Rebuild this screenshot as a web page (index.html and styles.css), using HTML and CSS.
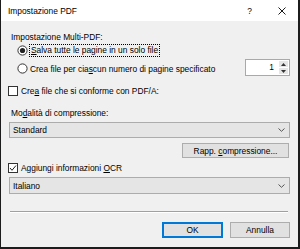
FILE: index.html
```html
<!DOCTYPE html>
<html lang="it">
<head>
  <meta charset="UTF-8" />
  <title>Impostazione PDF</title>
  <link rel="stylesheet" href="styles.css">
</head>
<body>
<div class="dialog">
  <div class="titlebar">
    <span class="title">Impostazione PDF</span>
    <span class="help">?</span>
    <span class="close">
      <svg width="8" height="8" viewBox="0 0 8 8"><path d="M0.5 0.5L7.5 7.5M7.5 0.5L0.5 7.5" stroke="#000" stroke-width="0.9" fill="none"/></svg>
    </span>
  </div>

  <div class="content">
    <div class="label label-multi">Impostazione Multi-PDF:</div>

    <div class="row radio-row first">
      <svg class="radio" width="11" height="11" viewBox="0 0 11 11"><circle cx="5.5" cy="5.5" r="4.6" fill="#fff" stroke="#333"/><circle cx="5.5" cy="5.5" r="2.6" fill="#222"/></svg>
      <span class="text focus"><u>S</u>alva tutte le pagine in un solo file</span>
    </div>

    <div class="row radio-row second">
      <svg class="radio" width="11" height="11" viewBox="0 0 11 11"><circle cx="5.5" cy="5.5" r="4.6" fill="#fff" stroke="#333"/></svg>
      <span class="text">Crea file per cia<u>s</u>cun numero di pagine specificato</span>
      <div class="spin">
        <span class="spin-value">1</span>
        <span class="spin-buttons">
          <span class="spin-btn"><svg width="5" height="3" viewBox="0 0 5 3"><path d="M0 3L2.5 0L5 3Z" fill="#333"/></svg></span>
          <span class="spin-btn"><svg width="5" height="3" viewBox="0 0 5 3"><path d="M0 0L2.5 3L5 0Z" fill="#333"/></svg></span>
        </span>
      </div>
    </div>

    <div class="row check-row pdfa">
      <svg class="check" width="10" height="10" viewBox="0 0 10 10"><rect x="0.5" y="0.5" width="9" height="9" fill="#fff" stroke="#333"/></svg>
      <span class="text">Cre<u>a</u> file che si conforme con PDF/A:</span>
    </div>

    <div class="label label-mode">Mo<u>d</u>alità di compressione:</div>

    <div class="select select-mode">
      <span>Standard</span>
      <svg width="7" height="4" viewBox="0 0 7 4"><path d="M0.5 0.5L3.5 3.3L6.5 0.5" stroke="#555" fill="none"/></svg>
    </div>

    <div class="row btn-row">
      <button class="btn btn-ratio">Rapp. <u>c</u>ompressione...</button>
    </div>

    <div class="row check-row ocr">
      <svg class="check" width="10" height="10" viewBox="0 0 10 10"><rect x="0.5" y="0.5" width="9" height="9" fill="#fff" stroke="#333"/><path d="M2 5L4 7.3L8 2.5" stroke="#222" fill="none"/></svg>
      <span class="text">Aggiungi informazioni <u>O</u>CR</span>
    </div>

    <div class="select select-lang">
      <span>Italiano</span>
      <svg width="7" height="4" viewBox="0 0 7 4"><path d="M0.5 0.5L3.5 3.3L6.5 0.5" stroke="#555" fill="none"/></svg>
    </div>

    <div class="separator"></div>

    <div class="row footer">
      <button class="btn btn-ok">OK</button>
      <button class="btn btn-cancel">Annulla</button>
    </div>
  </div>
</div>
</body>
</html>
```

FILE: styles.css
```css
body {
  margin: 0;
  font-family: 'Liberation Sans', Arial, sans-serif;
  font-size: 8.4px;
  color: #000;
  background: #fff;
}
u {
  text-decoration-thickness: 1px;
  text-underline-offset: 1px;
}
.dialog {
  width: 300px;
  height: 249px;
  box-sizing: border-box;
  border-style: solid;
  border-color: #1c1c1c;
  border-width: 0 2px 2px 1px;
  background: #f0f0f0;
}
.titlebar {
  height: 21px;
  background: #fff;
  display: flex;
  align-items: center;
  padding-left: 7px;
}
.title {
  flex: 1;
}
.help {
  width: 31px;
  text-align: center;
}
.close {
  width: 33px;
  display: flex;
  justify-content: center;
}
.content {
  padding: 10px 8px 0 7px;
}
.row {
  display: flex;
  align-items: center;
}
.label {
  height: 12px;
  line-height: 12px;
  padding-left: 3px;
}
.radio-row {
  height: 12px;
  padding-left: 9px;
  margin-top: 1px;
}
.radio-row.second {
  height: 17px;
  margin-top: 3px;
}
.radio {
  margin-right: 2px;
  flex: none;
}
.radio-row.second .radio {
  margin-top: 2px;
}
.radio-row.second .text {
  margin-top: 2px;
}
.text {
  white-space: nowrap;
}
.text.focus {
  outline: 1px dotted #000;
  outline-offset: 0;
  padding: 0 1px;
  line-height: 11px;
}
.spin {
  margin-left: auto;
  width: 45px;
  height: 17px;
  box-sizing: border-box;
  border: 1px solid #a9a9a9;
  background: #fff;
  display: flex;
}
.spin-value {
  flex: 1;
  text-align: right;
  padding-right: 4px;
  line-height: 15px;
}
.spin-buttons {
  width: 11px;
  display: flex;
  flex-direction: column;
  gap: 1px;
  padding: 1px;
  box-sizing: border-box;
}
.spin-btn {
  flex: 1;
  background: #e6e6e6;
  display: flex;
  align-items: center;
  justify-content: center;
}
.check-row {
  height: 12px;
}
.check {
  flex: none;
  margin-right: 3px;
}
.check-row.pdfa {
  margin-top: 9px;
}
.label-mode {
  margin-top: 10px;
}
.select {
  height: 16px;
  box-sizing: border-box;
  margin-left: 1px;
  border: 1px solid #acacac;
  background: #e5e5e5;
  display: flex;
  align-items: center;
  justify-content: space-between;
  padding: 0 4px 0 3px;
}
.select-mode {
  margin-top: 3px;
}
.btn-row {
  justify-content: flex-end;
  margin-top: 5px;
}
.btn {
  font: inherit;
  color: #000;
  height: 15px;
  box-sizing: border-box;
  background: #e1e1e1;
  border: 1px solid #adadad;
  padding: 0;
  margin: 0;
}
.btn-ratio {
  width: 107px;
  margin-right: 1px;
}
.check-row.ocr {
  margin-top: 4px;
}
.select-lang {
  margin-top: 3px;
  height: 17px;
}
.separator {
  margin: 17px 2px 0 2px;
  height: 1px;
  background: #a0a0a0;
  border-bottom: 1px solid #fff;
}
.footer {
  justify-content: flex-end;
  gap: 7px;
  margin-top: 9px;
}
.footer .btn {
  height: 16px;
}
.btn-ok {
  width: 61px;
  border: 1px solid #0078d7;
  box-shadow: inset 0 0 0 1px #0078d7;
}
.btn-cancel {
  width: 60px;
}
```
